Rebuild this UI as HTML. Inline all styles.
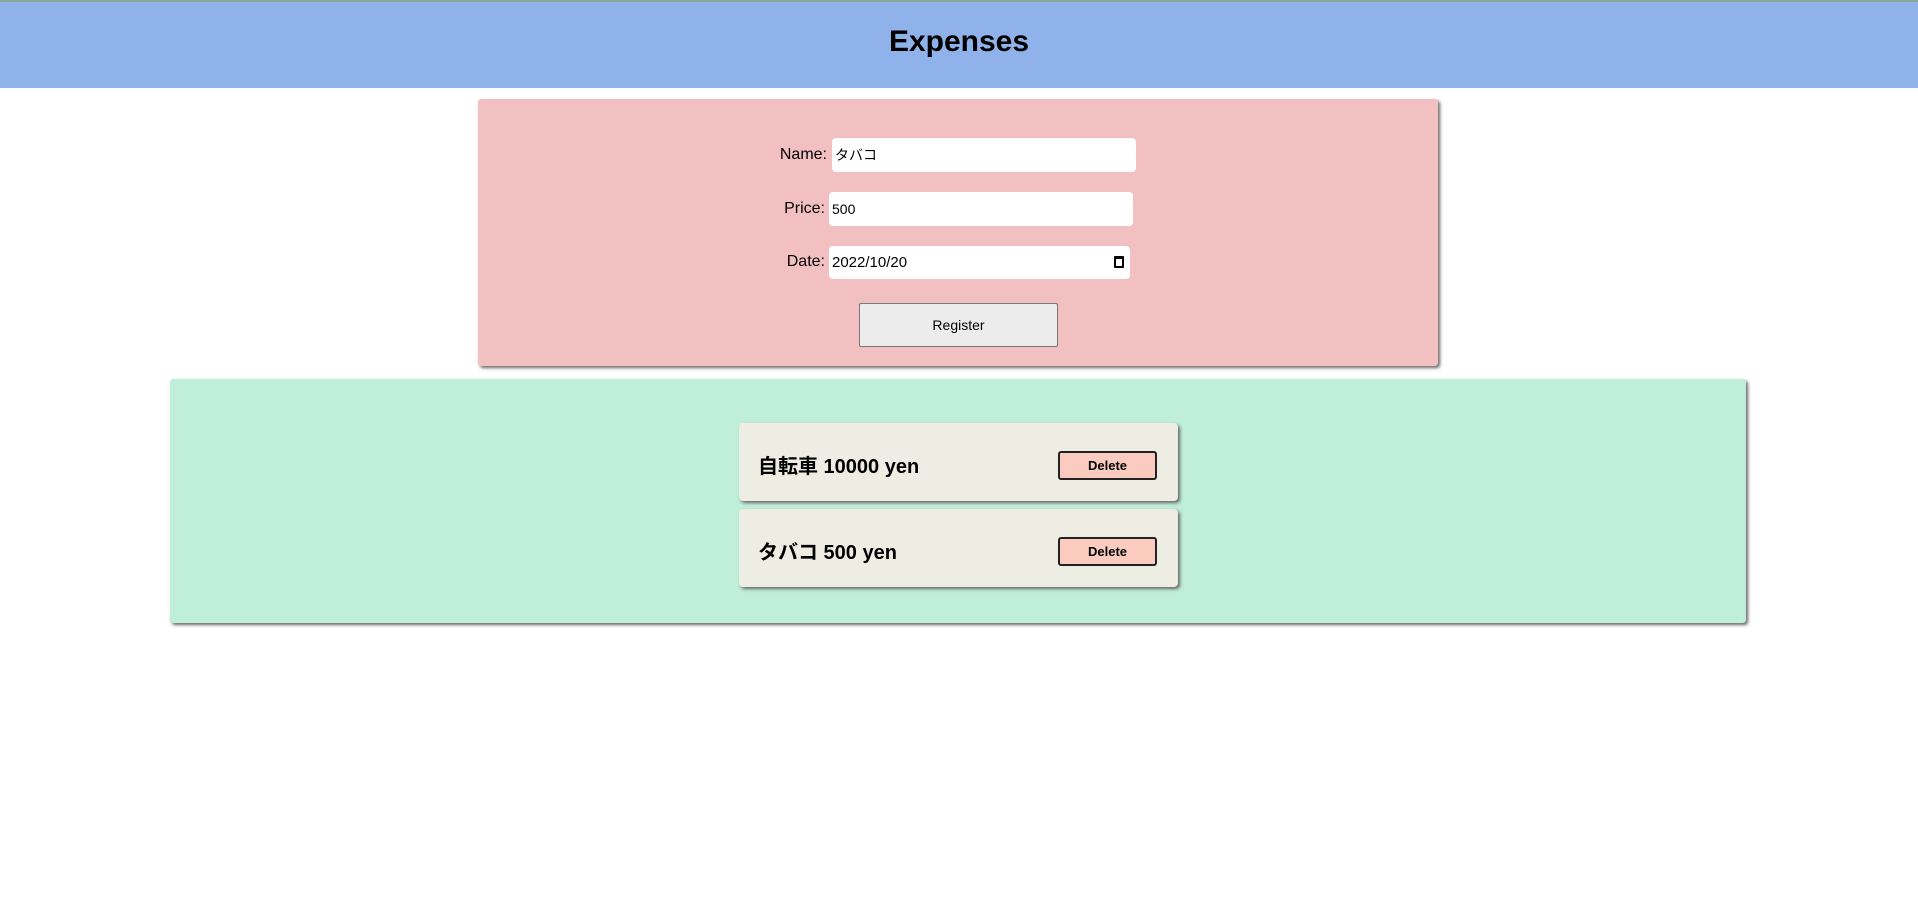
<!DOCTYPE html>
<html><head><meta charset="utf-8"><style>
*{box-sizing:border-box}
body{margin:0;width:1918px;height:913px;background:#fff;font-family:"Liberation Sans","Noto Sans CJK JP",sans-serif;position:relative;overflow:hidden}
.hdr{position:absolute;left:0;top:0;width:1918px;height:88px;background:#90b2ea;border-top:2px solid #8aa89a}
.hdr h1{margin:0;position:absolute;left:0;right:0;top:23px;text-align:center;font-size:30px;font-weight:bold;color:#000}
.pink{position:absolute;left:478px;top:99px;width:960px;height:267px;background:#f2c0c1;border-radius:3px;box-shadow:2px 2px 3px #666}
.lbl{position:absolute;font-size:16px;color:#000;text-align:right;width:120px}
.inp{position:absolute;background:#fff;border-radius:4px;height:34px;font-size:14px;padding-left:3px;line-height:34px;color:#000}
.btn{position:absolute;left:859px;top:303px;width:199px;height:44px;background:#ececec;border:1px solid #777;border-radius:2px;font-size:14px;text-align:center;line-height:42px}
.green{position:absolute;left:170px;top:379px;width:1576px;height:244px;background:#bfeed9;border-radius:3px;box-shadow:2px 2px 3px #666}
.card{position:absolute;left:739px;width:439px;height:78px;background:#eeede3;border-radius:4px;box-shadow:2px 2px 3px #666}
.card span{position:absolute;left:19px;top:27px;font-size:20px;font-weight:bold}
.del{position:absolute;left:319px;top:28px;width:99px;height:29px;background:#fbcbbf;border:2px solid #222;border-radius:3px;font-size:13px;font-weight:bold;text-align:center;line-height:25px}
</style></head><body>
<div class="hdr"><h1>Expenses</h1></div>
<div class="pink"></div>
<div class="lbl" style="left:707px;top:146px">Name:</div>
<div class="inp" style="left:832px;top:138px;width:304px">タバコ</div>
<div class="lbl" style="left:705px;top:200px">Price:</div>
<div class="inp" style="left:829px;top:192px;width:304px">500</div>
<div class="lbl" style="left:705px;top:253px">Date:</div>
<div class="inp" style="left:829px;top:246px;width:301px;height:33px;line-height:33px;font-size:15px">2022/10/20<span style="position:absolute;right:6px;top:10px;width:10px;height:12px;border:2px solid #000;border-top-width:3px;border-radius:1px"></span></div>
<div class="btn">Register</div>
<div class="green"></div>
<div class="card" style="top:423px"><span>自転車 10000 yen</span><div class="del">Delete</div></div>
<div class="card" style="top:509px"><span>タバコ 500 yen</span><div class="del">Delete</div></div>
</body></html>
